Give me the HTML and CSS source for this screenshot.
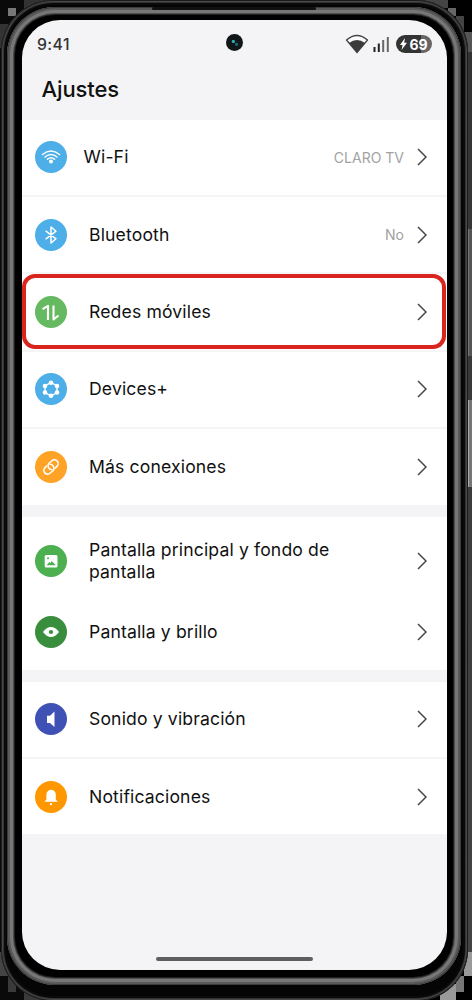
FILE: index.html
```
<!DOCTYPE html>
<html lang="es">
<head>
<meta charset="utf-8">
<title>Ajustes</title>
<link rel="stylesheet" href="styles.css">
</head>
<body>
<div class="phone">
  <div class="speaker"></div>
  <div class="side-key side-key-volume"></div>
  <div class="side-key side-key-power"></div>
  <div class="bezel">
    <main class="screen">
      <header class="header">
        <div class="status">
          <span class="time">9:41</span>
          <span class="status-icons">
            <svg class="signal-wifi" viewBox="0 0 24 20"><path d="M1.500 6Q12-3 22.500 6L12 18.500Z" fill="#fafafa" stroke="#444" stroke-width="1.300" stroke-linejoin="round"/><path d="M4 9Q12 3 20 9L12 18.500Z" fill="#3b3b3b"/></svg>
            <svg class="signal-bars" viewBox="0 0 17 17"><path d="M1.500 11v5M5.800 7.500V16" stroke="#222" stroke-width="2"/><path d="M10.200 4v12M14.800 1v15" stroke="#666" stroke-width="2"/></svg>
            <span class="battery"><svg class="bolt" viewBox="0 0 7 12"><path d="M5 0L0 7h2.600L1.500 12 7 4.800H4.200Z" fill="#fff"/></svg>69</span>
          </span>
        </div>
        <h1 class="title">Ajustes</h1>
        <div class="camera"></div>
      </header>

      <section class="group">
        <div class="row row-wifi">
          <svg class="icon sky" viewBox="0 0 32 32"><g fill="none" stroke="#fff" stroke-width="1.500" stroke-linecap="round"><path d="M7.500 13.500Q16 6.500 24.500 13.500M10 16Q16 11.200 22 16M12.500 18.200Q16 15.500 19.500 18.200"/></g><circle cx="16" cy="20.500" r="2" fill="#fff"/></svg>
          <span class="label">Wi-Fi</span><span class="value">CLARO TV</span>
          <svg class="chevron" viewBox="0 0 10 18"><path d="M1 1l8 8-8 8"/></svg>
        </div>
        <div class="row">
          <svg class="icon sky" viewBox="0 0 32 32"><path d="M11 12.200l10 7.600-5 4.200V8l5 4.200-10 7.600" fill="none" stroke="#fff" stroke-width="1.500" stroke-linejoin="round" stroke-linecap="round"/></svg>
          <span class="label">Bluetooth</span><span class="value">No</span>
          <svg class="chevron" viewBox="0 0 10 18"><path d="M1 1l8 8-8 8"/></svg>
        </div>
        <div class="row row-selected">
          <svg class="icon leaf" viewBox="0 0 32 32"><path d="M7.500 13.200l5.500-3.400v14.200M18.500 9.500v14l5-4" fill="none" stroke="#fff" stroke-width="2.100" stroke-linejoin="round"/></svg>
          <span class="label">Redes móviles</span>
          <svg class="chevron" viewBox="0 0 10 18"><path d="M1 1l8 8-8 8"/></svg>
        </div>
        <div class="row">
          <svg class="icon sky" viewBox="0 0 32 32"><path d="M16 9.500l6 3.500v6.500L16 23l-6-3.500V13Z" fill="none" stroke="#fff" stroke-width="1.400"/><g fill="#fff"><circle cx="16" cy="9.700" r="2.300"/><circle cx="22" cy="13" r="2.300"/><circle cx="22" cy="19.500" r="2.300"/><circle cx="16" cy="22.800" r="2.300"/><circle cx="10" cy="19.500" r="2.300"/><circle cx="10" cy="13" r="2.300"/></g></svg>
          <span class="label">Devices+</span>
          <svg class="chevron" viewBox="0 0 10 18"><path d="M1 1l8 8-8 8"/></svg>
        </div>
        <div class="row">
          <svg class="icon amber" viewBox="0 0 32 32"><g fill="none" stroke="#fff" stroke-width="1.600" stroke-linecap="round" stroke-linejoin="round"><path d="M16.800 18.700a4 4 0 0 1-3.100-6.200l3-2.500a3.700 3.700 0 0 1 5.400 5.200l-1.700 1.700"/><path d="M15.200 13.300a4 4 0 0 1 3.100 6.200l-3 2.500a3.700 3.700 0 0 1-5.400-5.200l1.700-1.700"/></g></svg>
          <span class="label">Más conexiones</span>
          <svg class="chevron" viewBox="0 0 10 18"><path d="M1 1l8 8-8 8"/></svg>
        </div>
      </section>

      <section class="group group-display">
        <div class="row row-tall">
          <svg class="icon green" viewBox="0 0 32 32"><rect x="9.700" y="10" width="12.800" height="12.500" rx="1.500" fill="#fff"/><circle cx="13" cy="13.300" r="1" fill="#4caf50"/><path d="M11.500 20.300l3-3.300 1.200 1 1-2 4.200 4.300Z" fill="#4caf50"/></svg>
          <span class="label">Pantalla principal y fondo de pantalla</span>
          <svg class="chevron" viewBox="0 0 10 18"><path d="M1 1l8 8-8 8"/></svg>
        </div>
        <div class="row">
          <svg class="icon forest" viewBox="0 0 32 32"><path d="M8 16q3.500-5 8-5t8 5q-3.500 5-8 5t-8-5Z" fill="#fff"/><circle cx="16" cy="16" r="2.100" fill="#388e3c"/></svg>
          <span class="label">Pantalla y brillo</span>
          <svg class="chevron" viewBox="0 0 10 18"><path d="M1 1l8 8-8 8"/></svg>
        </div>
      </section>

      <section class="group">
        <div class="row">
          <svg class="icon indigo" viewBox="0 0 32 32"><path d="M12 12.700h3L19.500 8.500v15.500L15 20h-3Z" fill="#fff"/></svg>
          <span class="label">Sonido y vibración</span>
          <svg class="chevron" viewBox="0 0 10 18"><path d="M1 1l8 8-8 8"/></svg>
        </div>
        <div class="row">
          <svg class="icon orange" viewBox="0 0 32 32"><path d="M9.200 20.800l2.200-2V13.500a4.700 4.700 0 0 1 9.400 0v5.300l2.200 2Z" fill="#fff"/><circle cx="16" cy="23.200" r="1.100" fill="#fff"/></svg>
          <span class="label">Notificaciones</span>
          <svg class="chevron" viewBox="0 0 10 18"><path d="M1 1l8 8-8 8"/></svg>
        </div>
      </section>
      <div class="home-bar"></div>
    </main>
  </div>
</div>
</body>
</html>
```
FILE: styles.css
```
* { box-sizing: border-box; }
body {
  margin: 0;
  width: 472px;
  height: 1000px;
  overflow: hidden;
  background:
    linear-gradient(#777, #777) 8px 8px / 8px 8px no-repeat,
    linear-gradient(#333, #333) 0 24px / 8px 24px no-repeat,
    linear-gradient(#333, #333) 24px 0 / 24px 8px no-repeat,
    linear-gradient(#444, #444) 424px 0 / 24px 8px no-repeat,
    linear-gradient(#666, #666) 448px 8px / 8px 8px no-repeat,
    linear-gradient(#444, #444) 456px 16px / 8px 16px no-repeat,
    linear-gradient(#555, #555) 464px 32px / 8px 20px no-repeat,
    linear-gradient(#444, #444) 0 952px / 8px 24px no-repeat,
    linear-gradient(#3a3a3a, #3a3a3a) 8px 976px / 8px 16px no-repeat,
    linear-gradient(#3a3a3a, #3a3a3a) 24px 992px / 16px 8px no-repeat,
    linear-gradient(#999, #999) 464px 952px / 8px 24px no-repeat,
    linear-gradient(#777, #777) 456px 976px / 8px 16px no-repeat,
    linear-gradient(#999, #999) 440px 984px / 16px 16px no-repeat,
    linear-gradient(90deg, #0a0a0a 50%, transparent 50%),
    linear-gradient(#000 0 32px, #333 52px, #444 952px, #000 953px);
  font-family: Inter, "Liberation Sans", sans-serif;
}
.phone {
  position: relative;
  width: 467px;
  height: 1001px;
  margin-left: 1px;
  padding: 7px 7px 8px 6px;
  border-radius: 52px;
  background: #050505;
  box-shadow: inset 0 0 0 1px #1c1c1c, inset 0 0 0 2px #484848, inset 0 0 0 3px #333, inset 0 0 0 5px #0a0a0a;
}
.bezel {
  height: 978px;
  padding: 13px 14px 15px 15px;
  border-radius: 48px;
  background: #000;
  box-shadow: inset 0 0 0 1px #3c3c3c, inset 0 0 0 3px #5a5a5a, inset 0 0 0 6px #777, inset 0 0 0 7px #4c4c4c, inset 0 0 0 8px #222;
}
.screen {
  display: flex;
  flex-direction: column;
  height: 950px;
  overflow: hidden;
  border-radius: 38px;
  background: #f4f4f6;
  color: #111;
}
.header {
  position: relative;
  flex: none;
  height: 99.500px;
  padding: 14px 15px 0;
}
.status {
  display: flex;
  justify-content: space-between;
  align-items: center;
  height: 20px;
}
.time { font-size: 15.800px; font-weight: 500; color: #333; letter-spacing: .4px; }
.status-icons { display: flex; align-items: center; }
.signal-wifi { width: 24px; height: 20px; margin-right: 4px; }
.signal-bars { width: 17px; height: 17px; margin-right: 6px; }
.battery {
  display: flex;
  align-items: center;
  justify-content: center;
  gap: 2px;
  width: 36px;
  height: 18px;
  border-radius: 9px;
  background: linear-gradient(90deg, #333 70%, #666 70%);
  color: #fff;
  font-size: 14px;
  font-weight: 700;
}
.bolt { width: 7px; height: 12px; }
.title {
  margin: 21px 0 0 4.500px;
  font-size: 22px;
  line-height: 28px;
  font-weight: 500;
  letter-spacing: -.1px;
  color: #111;
}
.camera {
  position: absolute;
  left: 203.500px;
  top: 14px;
  width: 17px;
  height: 17px;
  border-radius: 50%;
  background: radial-gradient(circle at 43% 44%, #2ba6ad 0 1.300px, transparent 2px), radial-gradient(circle at 62% 61%, #177078 0 1px, transparent 2px), #111718;
}
.group { flex: none; margin-bottom: 12px; background: #fff; }
.row {
  display: flex;
  align-items: center;
  height: 75.500px;
  padding: 0 20px 0 13px;
}
.row + .row { height: 77.400px; border-top: 2px solid #f5f5f6; }
.group-display { height: 153px; }
.group-display .row-tall { height: 83px; padding-top: 5px; }
.group-display .row + .row { height: 65px; border-top: 0; }
.icon { flex: none; width: 32px; height: 32px; margin-right: 22px; border-radius: 50%; }
.row-wifi .icon { margin-right: 16.500px; }
.label { flex: 1; max-width: 260px; font-size: 17.600px; line-height: 22px; letter-spacing: .14px; }
.value { margin-left: auto; font-size: 14px; color: #a2a2a2; }
.chevron { flex: none; width: 10px; height: 18px; margin-left: auto; fill: none; stroke: #444; stroke-width: 1.500; }
.value + .chevron { margin-left: 13px; }
.row-selected { position: relative; }
.row-selected::after {
  content: "";
  position: absolute;
  inset: 0 1px 1px 0;
  border: 4px solid #d9251d;
  border-radius: 13px;
}
.sky { background: #4daee8; }
.leaf { background: #65b960; }
.amber { background: #ffa326; }
.green { background: #4caf50; }
.forest { background: #388e3c; }
.indigo { background: #3f51b5; }
.orange { background: #ff9800; }
.home-bar { width: 157px; height: 4px; margin: auto auto 9px; border-radius: 2px; background: #5e5e60; }
.speaker { position: absolute; top: 7px; left: 151px; width: 164px; height: 3px; border-radius: 2px; background: #111; }
.side-key { position: absolute; left: 467px; width: 4px; }
.side-key-volume { top: 229px; height: 127px; border-left: 1px solid #777; background: #555; }
.side-key-power { top: 400px; height: 87px; border-left: 1px solid #aaa; background: #777; }
```
